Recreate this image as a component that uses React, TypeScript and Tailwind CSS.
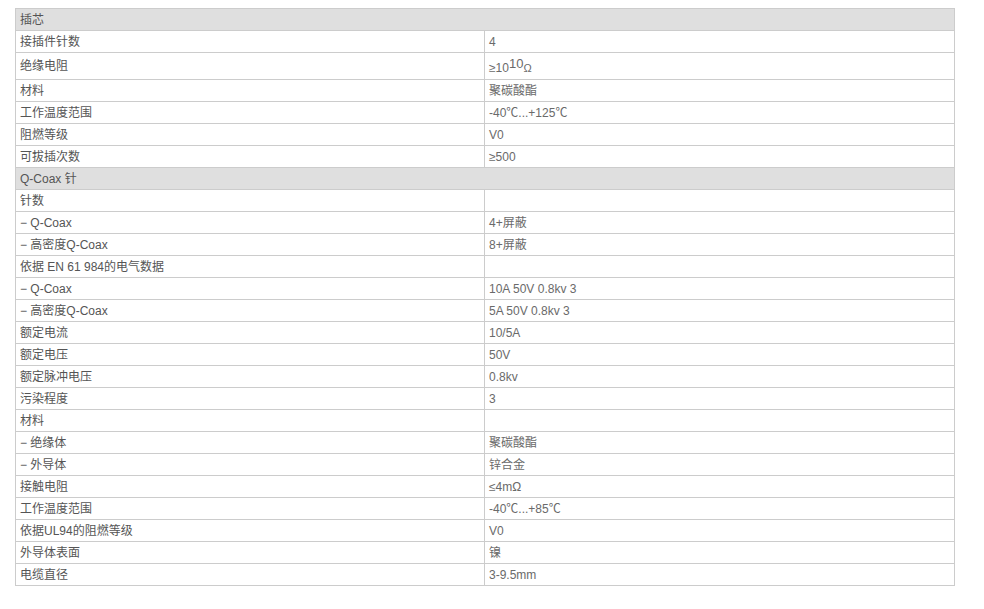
import type { ReactNode } from "react";

type Row =
  | { kind: "head"; label: string }
  | { kind: "row"; label: string; value?: ReactNode; tall?: boolean };

const rows: Row[] = [
  { kind: "head", label: "插芯" },
  { kind: "row", label: "接插件针数", value: "4" },
  {
    kind: "row",
    label: "绝缘电阻",
    tall: true,
    value: (
      <span className="pt-[3px]">
        ≥10
        <span className="relative -top-[4px] text-[13px]">10</span>
        <span className="text-[11px]">Ω</span>
      </span>
    ),
  },
  { kind: "row", label: "材料", value: "聚碳酸酯" },
  { kind: "row", label: "工作温度范围", value: "-40℃...+125℃" },
  { kind: "row", label: "阻燃等级", value: "V0" },
  { kind: "row", label: "可拔插次数", value: "≥500" },
  { kind: "head", label: "Q-Coax 针" },
  { kind: "row", label: "针数" },
  { kind: "row", label: "− Q-Coax", value: "4+屏蔽" },
  { kind: "row", label: "− 高密度Q-Coax", value: "8+屏蔽" },
  { kind: "row", label: "依据 EN 61 984的电气数据" },
  { kind: "row", label: "− Q-Coax", value: "10A 50V 0.8kv 3" },
  { kind: "row", label: "− 高密度Q-Coax", value: "5A 50V 0.8kv 3" },
  { kind: "row", label: "额定电流", value: "10/5A" },
  { kind: "row", label: "额定电压", value: "50V" },
  { kind: "row", label: "额定脉冲电压", value: "0.8kv" },
  { kind: "row", label: "污染程度", value: "3" },
  { kind: "row", label: "材料" },
  { kind: "row", label: "− 绝缘体", value: "聚碳酸酯" },
  { kind: "row", label: "− 外导体", value: "锌合金" },
  { kind: "row", label: "接触电阻", value: "≤4mΩ" },
  { kind: "row", label: "工作温度范围", value: "-40℃...+85℃" },
  { kind: "row", label: "依据UL94的阻燃等级", value: "V0" },
  { kind: "row", label: "外导体表面", value: "镍" },
  { kind: "row", label: "电缆直径", value: "3-9.5mm" },
];

export default function App() {
  return (
    <div className="min-h-[609px] w-[984px] bg-white pt-[8px] pl-[15px] font-['Liberation_Sans','Noto_Sans_CJK_SC',sans-serif] text-[12px]">
      <div className="w-[940px] border-x border-t border-[#cccccc]">
        {rows.map((r, i) =>
          r.kind === "head" ? (
            <div
              key={i}
              className="flex h-[22px] items-center border-b border-[#cccccc] bg-[#dfdfdf] pl-1 text-[#555555]"
            >
              {r.label}
            </div>
          ) : (
            <div
              key={i}
              className={`flex border-b border-[#cccccc] ${r.tall ? "h-[27px]" : "h-[22px]"}`}
            >
              <div className="flex w-[469px] shrink-0 items-center border-r border-[#cccccc] pl-1 text-[#555555]">
                {r.label}
              </div>
              <div className="flex flex-1 items-center pl-1 text-[#6a6a6a]">
                {r.value}
              </div>
            </div>
          )
        )}
      </div>
    </div>
  );
}
